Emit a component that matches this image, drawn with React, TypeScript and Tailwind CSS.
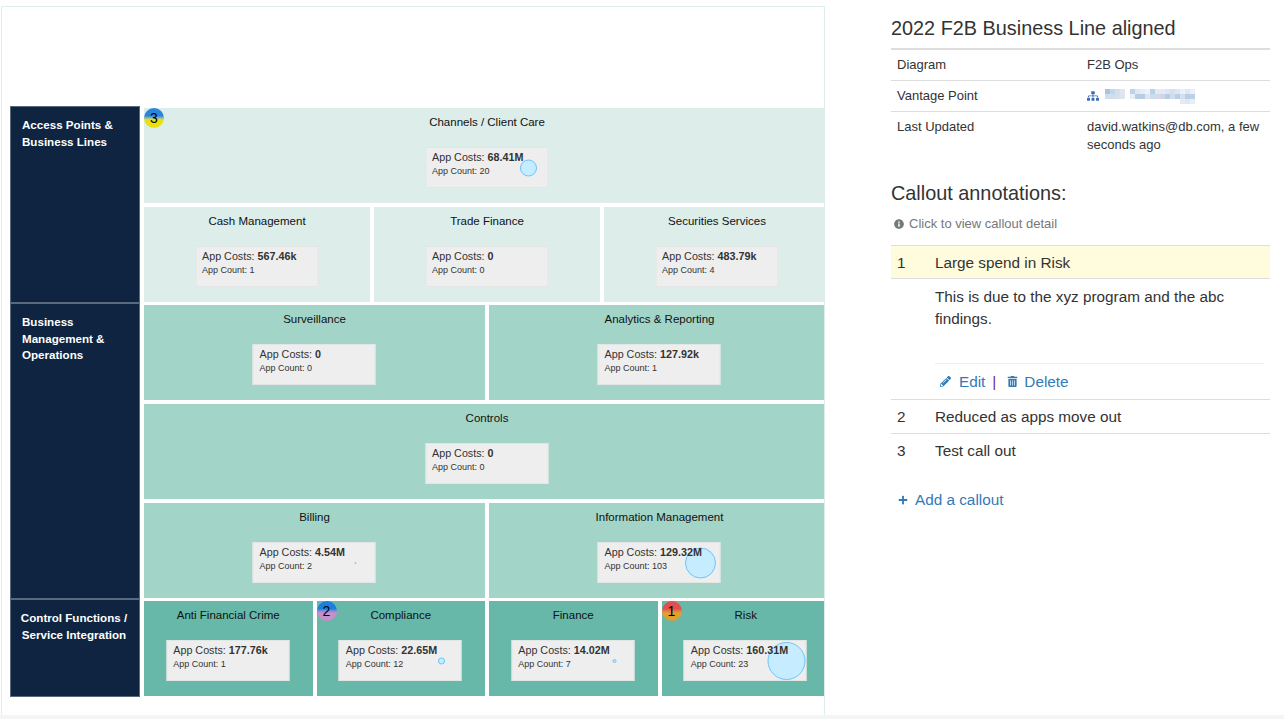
import { FaInfoCircle, FaPencilAlt, FaPlus, FaSitemap, FaTrashAlt } from 'react-icons/fa';

interface CellData {
  title: string;
  costs: string;
  count: number;
  bubble?: number;
  badge?: 1 | 2 | 3;
}

const BADGE_CLASSES = {
  1: 'from-[#e2504e] to-[#e0a030]',
  2: 'from-[#1c7fe0] to-[#c88fc8]',
  3: 'from-[#2a86dc] to-[#e8e010]',
};

const BLUR_ROWS = [
  ['#a9c4e0', '#c4d6ea', '#d2dfee', '#dfe8f2', '', '#bcd2e8', '#dfe8f2', '#e6edf5', '#eef2f8', '#b9d2e8', '#e4eaf4', '#e4eaf4', '#dce6f2', '#d4e0ee', '#dde6f2', '#eaf0f6', '#dfe8f2', '#eaf0f6'],
  ['#d0ddec', '#d0ddec', '#d4e0ee', '#dce6f1', '', '#e8eef6', '#b8cce2', '#b8cce2', '#dde6f1', '#cfdcec', '#d5d8e8', '#d0d4e6', '#b4cce4', '#d0deec', '#b8d0e4', '#d4e0ee', '#b8cee4', '#bcd2e6'],
  ['', '', '', '', '', '', '', '', '', '', '', '', '', '', '', '#e4ebf4', '#dfe8f2', '#e8eef6'],
];

function Cell({ data, rowColor }: { data: CellData; rowColor: string }) {
  return (
    <div className={`relative h-[95px] ${rowColor}`}>
      {data.badge && (
        <div
          className={`absolute left-0 top-0 flex h-5 w-5 items-center justify-center rounded-full bg-linear-to-b from-40% to-60% text-sm text-black ${BADGE_CLASSES[data.badge]}`}
        >
          {data.badge}
        </div>
      )}
      <div className="pt-[7px] text-center text-[11.5px] leading-[15px] text-[#111]">{data.title}</div>
      <div className="relative mx-auto mt-[17px] h-[41px] w-[123px] -translate-x-[0.5px] border border-[#e2e6e4] bg-[#eeeeee] px-[6px] pt-[1.5px] text-[#333]">
        {data.bubble !== undefined && (
          <svg className="absolute left-[61px] top-[-20px] overflow-visible" width="80" height="80">
            <circle cx="41" cy="40" r={data.bubble} fill="#c6ecff" stroke="#6cc4fa" strokeWidth="1" />
          </svg>
        )}
        <div className="relative text-[10.75px] leading-[14px]">
          App Costs: <b>{data.costs}</b>
        </div>
        <div className="relative text-[9px] leading-[15px]">App Count: {data.count}</div>
      </div>
    </div>
  );
}

function Group({
  label,
  rows,
  rowColor,
  center,
}: {
  label: string;
  rows: CellData[][];
  rowColor: string;
  center?: boolean;
}) {
  return (
    <div className="flex">
      <div
        className={`w-[130px] shrink-0 border border-[#5a6a7e] bg-[#0e2441] pt-[10px] text-[11.6px] leading-[16.5px] font-bold text-white ${center ? 'pl-[8px] pr-[10px] text-center' : 'px-[11px]'}`}
      >
        {label}
      </div>
      <div className="ml-[4px] flex w-[686px] shrink-0 flex-col gap-[4px] pt-[2px] pb-[1px]">
        {rows.map((row, i) => (
          <div
            key={i}
            className={`grid gap-[4px] ${row.length === 1 ? 'grid-cols-1' : row.length === 2 ? 'grid-cols-2' : row.length === 3 ? 'grid-cols-3' : 'grid-cols-4'}`}
          >
            {row.map((cell) => (
              <Cell key={cell.title} data={cell} rowColor={rowColor} />
            ))}
          </div>
        ))}
      </div>
    </div>
  );
}

function BlurredName() {
  return (
    <svg width="90" height="15" className="ml-[6px]">
      {BLUR_ROWS.map((row, y) =>
        row.map((fill, x) => (fill ? <rect key={`${x}-${y}`} x={x * 5} y={y * 5} width="5" height="5" fill={fill} /> : null))
      )}
    </svg>
  );
}

export default function App() {
  return (
    <div className="flex h-[719px] flex-col overflow-hidden bg-white font-['Liberation_Sans',Arial,sans-serif]">
      <div className="flex h-[715px]">
        {/* Diagram */}
        <div className="ml-px mt-[6px] w-[824px] shrink-0 overflow-hidden border-x border-t border-[#e0eeee] pl-[8px] pt-[99px]">
          <div className="flex w-[820px] flex-col">
            <Group
              label="Access Points & Business Lines"
              rowColor="bg-[#dcedea]"
              rows={[
                [{ title: 'Channels / Client Care', costs: '68.41M', count: 20, bubble: 8, badge: 3 }],
                [
                  { title: 'Cash Management', costs: '567.46k', count: 1 },
                  { title: 'Trade Finance', costs: '0', count: 0 },
                  { title: 'Securities Services', costs: '483.79k', count: 4 },
                ],
              ]}
            />
            <Group
              label="Business Management & Operations"
              rowColor="bg-[#a3d4c8]"
              rows={[
                [
                  { title: 'Surveillance', costs: '0', count: 0 },
                  { title: 'Analytics & Reporting', costs: '127.92k', count: 1 },
                ],
                [{ title: 'Controls', costs: '0', count: 0 }],
                [
                  { title: 'Billing', costs: '4.54M', count: 2, bubble: 0.5 },
                  { title: 'Information Management', costs: '129.32M', count: 103, bubble: 15 },
                ],
              ]}
            />
            <Group
              label="Control Functions / Service Integration"
              rowColor="bg-[#67b8a8]"
              center
              rows={[
                [
                  { title: 'Anti Financial Crime', costs: '177.76k', count: 1 },
                  { title: 'Compliance', costs: '22.65M', count: 12, bubble: 3, badge: 2 },
                  { title: 'Finance', costs: '14.02M', count: 7, bubble: 1.5 },
                  { title: 'Risk', costs: '160.31M', count: 23, bubble: 18.5, badge: 1 },
                ],
              ]}
            />
          </div>
        </div>

        {/* Side panel */}
        <div className="ml-[66px] w-[379px] shrink-0 text-[#333]">
          <h1 className="mt-[16px] text-[19.85px] leading-6">2022 F2B Business Line aligned</h1>
          <div className="mt-[8px] border-t-2 border-[#dddddd] text-[13px] leading-[18px]">
            <div className="grid grid-cols-[190px_1fr] border-b border-[#dddddd] px-[6px] py-[6px]">
              <div>Diagram</div>
              <div>F2B Ops</div>
            </div>
            <div className="grid grid-cols-[190px_1fr] border-b border-[#dddddd] px-[6px] py-[6px]">
              <div>Vantage Point</div>
              <div className="flex items-center">
                <FaSitemap className="text-[12px] text-[#3d6db5]" />
                <BlurredName />
              </div>
            </div>
            <div className="grid grid-cols-[190px_1fr] px-[6px] py-[6px]">
              <div>Last Updated</div>
              <div>david.watkins@db.com, a few seconds ago</div>
            </div>
          </div>

          <h2 className="mt-[21px] text-[19.85px] leading-6">Callout annotations:</h2>
          <div className="mt-[10px] flex items-center gap-[5px] pl-[3px] text-[13px] leading-[18px] text-[#777]">
            <FaInfoCircle className="text-[10px]" />
            <span>Click to view callout detail</span>
          </div>

          <div className="mt-[12px] text-[15.3px] leading-[21px]">
            <div className="flex h-[34px] items-center border-y border-[#dddddd] bg-[#fffbdd] px-[6px] pt-px">
              <span className="w-[38px]">1</span>
              <span>Large spend in Risk</span>
            </div>
            <div className="pl-[44px] pr-[6px]">
              <p className="pt-[7px] pb-[33px] leading-[22px]">This is due to the xyz program and the abc findings.</p>
              <div className="flex h-[36px] items-center border-t border-[#eeeeee] pl-[5px] text-[#337ab7]">
                <FaPencilAlt className="mr-[8px] text-[11px]" />
                <span>Edit</span>
                <span className="ml-[7px] mr-[11px] text-[#6b2f8f]">|</span>
                <FaTrashAlt className="mr-[6px] text-[11px]" />
                <span>Delete</span>
              </div>
            </div>
            <div className="flex h-[34px] items-center border-t border-[#dddddd] px-[6px]">
              <span className="w-[38px]">2</span>
              <span>Reduced as apps move out</span>
            </div>
            <div className="flex h-[34px] items-center border-t border-[#dddddd] px-[6px]">
              <span className="w-[38px]">3</span>
              <span>Test call out</span>
            </div>
            <div className="mt-[22px] flex items-center gap-[7px] pl-[7px] text-[#337ab7]">
              <FaPlus className="text-[10px]" />
              <span>Add a callout</span>
            </div>
          </div>
        </div>
      </div>
      <div className="h-[4px] bg-[#f5f5f5]" />
    </div>
  );
}
